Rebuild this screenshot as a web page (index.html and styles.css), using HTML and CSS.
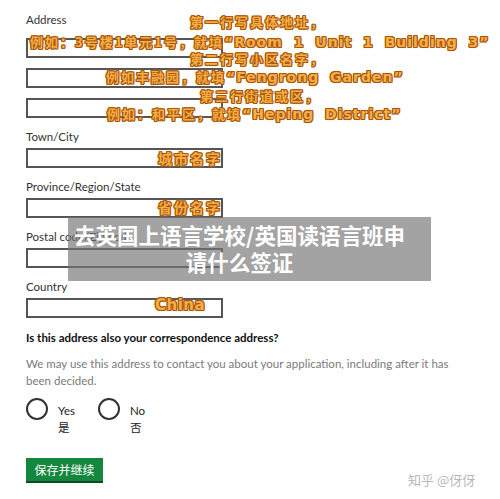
FILE: index.html
```html
<!DOCTYPE html>
<html lang="zh">
<head>
<meta charset="utf-8">
<link rel="stylesheet" href="styles.css">
</head>
<body>
<div class="page">
  <div class="form">
    <div class="label first">Address</div>
    <div class="box"></div>
    <div class="box gap"></div>
    <div class="box gap"></div>

    <div class="label">Town/City</div>
    <div class="box"></div>

    <div class="label">Province/Region/State</div>
    <div class="box"></div>

    <div class="label">Postal code/Zip code</div>
    <div class="box"></div>

    <div class="label">Country</div>
    <div class="box"></div>

    <div class="question">Is this address also your correspondence address?</div>
    <div class="hint">We may use this address to contact you about your application, including after it has been decided.</div>

    <div class="radios">
      <div class="radio">
        <span class="circle"></span>
        <span class="rtext">Yes<br>是</span>
      </div>
      <div class="radio">
        <span class="circle"></span>
        <span class="rtext">No<br>否</span>
      </div>
    </div>

    <div class="button">保存并继续</div>
  </div>

  <div class="note n1">第一行写具体地址，</div>
  <div class="note n2">例如：3号楼1单元1号，就填<span class="en">“Room 1 Unit 1 Building 3”</span></div>
  <div class="note n3">第二行写小区名字，</div>
  <div class="note n4">例如丰融园，就填<span class="en">“Fengrong Garden”</span></div>
  <div class="note n5">第三行街道或区，</div>
  <div class="note n6">例如：和平区，就填<span class="en">“Heping District”</span></div>
  <div class="note n7">城市名字</div>
  <div class="note n8">省份名字</div>
  <div class="note n9"><span class="en">China</span></div>

  <div class="banner">去英国上语言学校/英国读语言班申<br>请什么签证</div>

  <div class="watermark">知乎 @伢伢</div>
</div>
</body>
</html>
```

FILE: styles.css
```css
html, body {
  margin: 0;
  padding: 0;
  background: #ffffff;
}
.page {
  position: relative;
  width: 500px;
  height: 499px;
  overflow: hidden;
  font-family: Lato, "Noto Sans", "Noto Sans CJK SC", sans-serif;
  color: #2b2b2b;
}
.form {
  display: flex;
  flex-direction: column;
  align-items: flex-start;
  padding: 13px 0 0 26px;
}
.label {
  font-size: 11.5px;
  line-height: 14px;
  height: 14px;
  margin-top: 12px;
  margin-bottom: 4px;
  color: #333;
}
.label.first {
  margin-top: 0;
  margin-bottom: 11px;
}
.box {
  width: 193px;
  height: 16px;
  border: 2px solid #555;
  background: #fff;
}
.box.gap {
  margin-top: 10px;
}
.question {
  margin-top: 13px;
  font-size: 11.5px;
  line-height: 14px;
  font-weight: bold;
  color: #111;
}
.hint {
  margin-top: 10px;
  width: 440px;
  font-size: 11.5px;
  line-height: 17px;
  color: #7a7a7a;
}
.radios {
  display: flex;
  gap: 23px;
  margin-top: 9px;
}
.radio {
  display: flex;
  align-items: flex-start;
  gap: 10px;
}
.circle {
  width: 18px;
  height: 18px;
  border: 2px solid #333;
  border-radius: 50%;
}
.rtext {
  font-size: 11.5px;
  line-height: 17px;
  margin-top: 4px;
  color: #222;
}
.button {
  margin-top: 22px;
  width: 77px;
  height: 23px;
  background: #14873e;
  box-shadow: 0 2px 0 #0b4d24;
  color: #fff;
  font-family: "Noto Sans CJK SC", sans-serif;
  font-size: 12px;
  line-height: 23px;
  text-align: center;
}

.note {
  position: absolute;
  font-family: "Noto Sans CJK SC", sans-serif;
  font-weight: bold;
  font-size: 13px;
  line-height: 16px;
  letter-spacing: 2px;
  white-space: nowrap;
  color: #f6ae45;
  text-shadow:
    1px 0 0 #a8570d, -1px 0 0 #a8570d, 0 1px 0 #a8570d, 0 -1px 0 #a8570d,
    1px 1px 0 #a8570d, -1px -1px 0 #a8570d, 1px -1px 0 #a8570d, -1px 1px 0 #a8570d,
    0 0 3px #f7c27a;
}
.note .en {
  font-family: "DejaVu Sans", sans-serif;
  font-size: 14px;
  letter-spacing: 1px;
  word-spacing: 5px;
}
.n1 { left: 190px; top: 14px; }
.n2 { left: 30px; top: 34px; }
.n3 { left: 190px; top: 51px; }
.n4 { left: 106px; top: 69px; }
.n5 { left: 200px; top: 88px; }
.n6 { left: 107px; top: 106px; }
.n7 { left: 158px; top: 150px; font-size: 14px; }
.n8 { left: 158px; top: 199px; font-size: 14px; }
.n9 { left: 155px; top: 297px; }
.n9 .en { font-size: 15px; letter-spacing: 0.5px; }

.banner {
  position: absolute;
  left: 68px;
  top: 217px;
  width: 363px;
  height: 64px;
  box-sizing: border-box;
  padding: 4px 20px 0 0;
  background: rgba(115, 115, 115, 0.66);
  color: #fff;
  font-family: "Noto Sans CJK SC", sans-serif;
  font-weight: bold;
  font-size: 21.5px;
  line-height: 27px;
  text-align: center;
}
.watermark {
  position: absolute;
  left: 408px;
  top: 472px;
  font-family: "Noto Sans CJK SC", sans-serif;
  font-size: 13px;
  line-height: 16px;
  color: #b8b8b8;
}
```
